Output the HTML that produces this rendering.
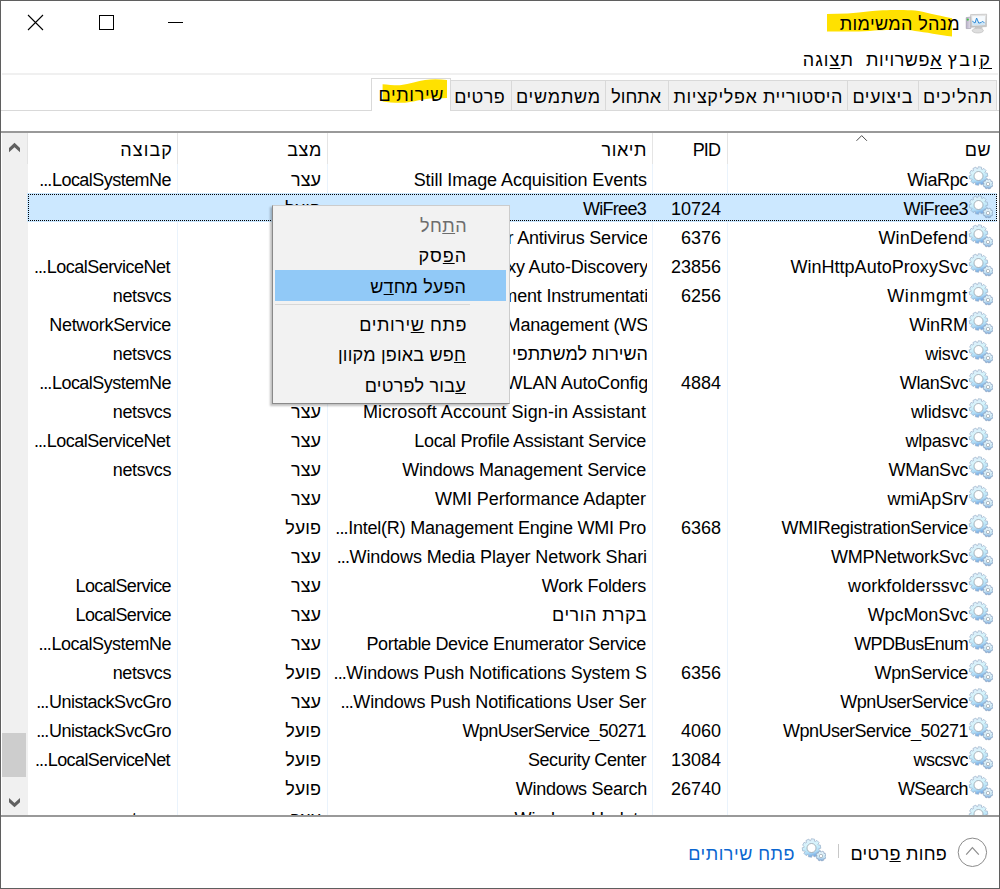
<!DOCTYPE html>
<html><head><meta charset="utf-8">
<style>
html,body{margin:0;padding:0;}
body{width:1000px;height:889px;overflow:hidden;background:#fff;position:relative;font-family:"Liberation Sans",sans-serif;font-size:18px;color:#000;}
.a{position:absolute;white-space:nowrap;line-height:20px;height:20px;}
.frame{position:absolute;left:0;top:0;width:1000px;height:889px;box-sizing:border-box;border:1px solid #5f5f5f;z-index:50;pointer-events:none;}
.u{text-decoration:underline;text-underline-offset:1px;text-decoration-thickness:1px;}
.um{text-decoration:underline;text-underline-offset:2px;text-decoration-thickness:1px;}
.tab{position:absolute;top:80px;height:30px;box-sizing:border-box;background:#f0f0f0;border:1px solid #d9d9d9;border-bottom:none;}
.vd{position:absolute;width:1px;background:#e5e5e5;}
.vdr{position:absolute;width:1px;background:#eaf3fc;}
.row{position:absolute;left:28px;width:970px;height:29px;}
.row.last .c{top:7px;}
.row.sel{background:#cce8ff;width:969px;box-shadow:-1px 0 0 #cce8ff;}
.row .c{position:absolute;top:6px;height:20px;line-height:20px;white-space:nowrap;overflow:hidden;direction:rtl;text-align:right;}
.dt{letter-spacing:-0.9px;margin-right:0.5px}
.cn{left:700px;width:240px;}
.gi{position:absolute;left:939px;top:1px;}
.cp{left:625px;width:68px;}
.cd{left:300px;width:319px;}
.cs{left:150px;width:143px;}
.cg{left:0px;width:144px;}
</style></head><body>
<svg width="0" height="0" style="position:absolute">
<defs>
<linearGradient id="gb" x1="0" y1="0" x2="0.25" y2="1"><stop offset="0" stop-color="#e2ecf8"/><stop offset="0.45" stop-color="#d4f4fc"/><stop offset="0.8" stop-color="#b0dcf6"/><stop offset="1" stop-color="#7cb0e6"/></linearGradient>
<linearGradient id="gs" x1="0" y1="0" x2="0" y2="1"><stop offset="0" stop-color="#eef8fc"/><stop offset="0.6" stop-color="#cdeaf8"/><stop offset="1" stop-color="#7aa8dc"/></linearGradient>
<symbol id="gear" viewBox="0 0 26 26">
<path d="M18.75,12.47L20.37,13.78L18.87,16.67L17.04,15.91L16.50,16.45L17.05,18.47L14.13,19.92L13.10,18.23L12.34,18.35L11.60,20.30L8.39,19.76L8.55,17.79L7.86,17.44L6.11,18.58L3.83,16.26L5.12,14.75L4.77,14.07L2.69,13.97L2.20,10.75L4.13,10.29L4.25,9.53L2.63,8.22L4.13,5.33L5.96,6.09L6.50,5.55L5.95,3.53L8.87,2.08L9.90,3.77L10.66,3.65L11.40,1.70L14.61,2.24L14.45,4.21L15.14,4.56L16.89,3.42L19.17,5.74L17.88,7.25L18.23,7.93L20.31,8.03L20.80,11.25L18.87,11.71Z" fill="url(#gb)" stroke="#9ab0c8" stroke-width="0.7"/>
<circle cx="11.5" cy="11" r="4.5" fill="#fff" stroke="#8e98a2" stroke-width="0.7"/>
<path d="M24.88,19.39L25.87,20.14L24.92,22.10L23.84,21.67L23.47,22.02L23.64,23.25L21.58,23.97L21.12,22.90L20.61,22.88L19.86,23.87L17.90,22.92L18.33,21.84L17.98,21.47L16.75,21.64L16.03,19.58L17.10,19.12L17.12,18.61L16.13,17.86L17.08,15.90L18.16,16.33L18.53,15.98L18.36,14.75L20.42,14.03L20.88,15.10L21.39,15.12L22.14,14.13L24.10,15.08L23.67,16.16L24.02,16.53L25.25,16.36L25.97,18.42L24.90,18.88Z" fill="url(#gs)" stroke="#8aa2c0" stroke-width="0.7"/>
<circle cx="21" cy="19" r="1.7" fill="#fff" stroke="#8c96a0" stroke-width="0.6"/>
</symbol>
</defs></svg>
<div class="frame"></div>
<!-- title bar -->
<svg class="a" style="left:0;top:0;width:200px;height:45px" width="200" height="45">
<path d="M28,15L43,30M43,15L28,30" stroke="#000" stroke-width="1.1" fill="none"/>
<rect x="99.5" y="15.5" width="14" height="14" stroke="#000" stroke-width="1" fill="none"/>
<path d="M168,22.5H183" stroke="#000" stroke-width="1" fill="none"/>
</svg>
<svg class="a" style="left:820px;top:5px;width:140px;height:35px" width="140" height="35">
<path d="M7,9.1 C20,9 35,8.4 50,6.3 C60,5 85,4.5 95,5.6 C105,7 115,10 132,13.3 L132,31.5 C120,30 105,27 95,25.9 C85,24.5 75,24.5 50,25.9 C35,26.6 20,26.6 7,26.6 Z" fill="#ffe100"/>
</svg>
<div class="a" id="title" style="right:40.00px;top:14px;letter-spacing:0.375px;">מנהל המשימות</div>
<svg class="a" style="left:965px;top:13px;width:24px;height:22px" width="24" height="22">
<defs><linearGradient id="tw" x1="0" y1="0" x2="1" y2="0"><stop offset="0" stop-color="#b8b0c8"/><stop offset="1" stop-color="#e4e0ea"/></linearGradient>
<linearGradient id="mf" x1="0" y1="0" x2="0" y2="1"><stop offset="0" stop-color="#e8e8e8"/><stop offset="1" stop-color="#c4c4c4"/></linearGradient></defs>
<path d="M1.2,4.6 L5.8,4 L5.8,15.5 L1.2,15.6 Z" fill="url(#tw)" stroke="#9c98aa" stroke-width="0.6"/>
<circle cx="2.8" cy="6.6" r="1.1" fill="#3fbf3f"/>
<path d="M5.6,1.6 L21.6,1.2 L21.4,13.6 L5.8,14.2 Z" fill="url(#mf)" stroke="#b4b4b4" stroke-width="0.6"/>
<path d="M7.2,3.2 L20,3 L19.9,11.9 L7.3,12.4 Z" fill="#f6fafd"/>
<path d="M7.3,8.5 L10,10.2 L11.6,5 L13.8,10.4 L16.4,9.6 L17.6,8.4 L19.6,10.4 L19.8,11.9 L7.3,12.3 Z" fill="#cfe6f6"/>
<path d="M7.3,8.2 L10,10 L11.6,5 L13.8,10.2 L16.4,9.4 L17.6,8.2 L19.6,10.2" stroke="#2f8ad6" stroke-width="1" fill="none" stroke-linejoin="round"/>
<path d="M10,14 L17,13.8 L18,15.5 L9.5,15.8 Z" fill="#c8c8c8"/>
<ellipse cx="12.8" cy="17.6" rx="5.6" ry="2.4" fill="#dedede" stroke="#b6b6b6" stroke-width="0.6"/>
</svg>
<!-- menu bar -->
<div class="a" id="kovetz" style="right:8.00px;top:50px;letter-spacing:2.250px;"><span class="um">ק</span>ובץ</div>
<div class="a" id="efsh" style="right:58.00px;top:50px;letter-spacing:0.562px;"><span class="um">א</span>פשרויות</div>
<div class="a" id="tazuga" style="right:146.00px;top:50px;letter-spacing:1.080px;">ת<span class="um">צ</span>וגה</div>
<div class="a" style="left:2px;top:73px;width:996px;height:2px;background:#f0f0f0"></div>
<!-- tabs -->
<div class="a" style="left:1px;top:110px;width:998px;height:1px;background:#d9d9d9"></div>
<div class="tab" style="left:918px;width:79px;"></div>
<div class="tab" style="left:847px;width:72px;"></div>
<div class="tab" style="left:668px;width:180px;"></div>
<div class="tab" style="left:605px;width:64px;"></div>
<div class="tab" style="left:511px;width:95px;"></div>
<div class="tab" style="left:450px;width:62px;"></div>
<div class="tab" style="left:371px;top:78px;width:80px;height:33px;background:#fff;"></div>
<svg class="a" style="left:370px;top:75px;width:80px;height:30px" width="80" height="30">
<path d="M12.6,9.3 C18,9.8 25,10.5 30,10.3 C40,9 48,6 55,5 C62,4 70,4.2 77,5 L77,23 C70,23.5 65,23.3 60,23.5 C50,24.5 45,26.5 35,27.8 C25,28 18,27.5 12.6,26.4 Z" fill="#ffe100"/>
</svg>
<div class="a" id="tab_tahalichim" style="right:7.00px;top:87px;letter-spacing:0.900px;">תהליכים</div>
<div class="a" id="tab_bitzuim" style="right:87.00px;top:87px;letter-spacing:0.514px;">ביצועים</div>
<div class="a" id="tab_hist" style="right:157.00px;top:87px;letter-spacing:0.568px;">היסטוריית אפליקציות</div>
<div class="a" id="tab_atchul" style="right:339.00px;top:87px;letter-spacing:0.000px;">אתחול</div>
<div class="a" id="tab_mishtamshim" style="right:399.00px;top:87px;letter-spacing:0.771px;">משתמשים</div>
<div class="a" id="tab_pratim" style="right:495.00px;top:87px;letter-spacing:0.360px;">פרטים</div>
<div class="a" id="tab_sherutim" style="right:556.00px;top:85px;letter-spacing:0.643px;">שירותים</div>
<!-- list separator -->
<div class="a" style="left:1px;top:131px;width:998px;height:2px;background:#999"></div>
<!-- scrollbar -->
<div class="a" style="left:2px;top:133px;width:26px;height:682px;background:#f0f0f0"></div>
<div class="a" style="left:27px;top:133px;width:1px;height:31px;background:#e3e3e3"></div>
<svg class="a" style="left:0;top:133px;width:28px;height:682px" width="28" height="682">
<path d="M9,15 L14.5,9.8 L20,15 L20,19.2 L14.5,14.2 L9,19.2 Z" fill="#606060"/>
<rect x="2" y="600" width="24" height="44" fill="#cdcdcd"/>
<path d="M9,665 L14.5,670 L20,665 L20,669.2 L14.5,674.2 L9,669.2 Z" fill="#606060"/>
</svg>
<!-- header -->
<div class="vd" style="left:177px;top:133px;height:31px"></div>
<div class="vd" style="left:327px;top:133px;height:31px"></div>
<div class="vd" style="left:652px;top:133px;height:31px"></div>
<div class="vd" style="left:727px;top:133px;height:31px"></div>
<div class="vdr" style="left:177px;top:164px;height:651px"></div>
<div class="vdr" style="left:327px;top:164px;height:651px"></div>
<div class="vdr" style="left:652px;top:164px;height:651px"></div>
<div class="vdr" style="left:727px;top:164px;height:651px"></div>
<svg class="a" style="left:850px;top:133px;width:24px;height:10px" width="24" height="10">
<path d="M6.5,7.8 L11.7,2.6 L16.9,7.8" stroke="#4a4a4a" stroke-width="1" fill="none"/>
</svg>
<div class="a" id="hdr_shem" style="right:9.00px;top:140px;letter-spacing:0.450px;">שם</div>
<div class="a" id="hdr_pid" style="right:280.00px;top:140px;letter-spacing:-0.900px;">PID</div>
<div class="a" id="hdr_teur" style="right:353.00px;top:140px;letter-spacing:0.540px;">תיאור</div>
<div class="a" id="hdr_matzav" style="right:678.00px;top:140px;letter-spacing:0.600px;">מצב</div>
<div class="a" id="hdr_kvutza" style="right:827.00px;top:140px;letter-spacing:1.080px;">קבוצה</div>
<!-- rows -->
<div class="a" style="left:0;top:164px;width:1000px;height:651px;overflow:hidden;">
<div style="position:absolute;left:0;top:-164px;width:1000px;height:889px;">
<div class="row" style="top:164px"><div class="c cn"><bdi style="letter-spacing:-0.360px;position:relative;left:0.00px">WiaRpc</bdi></div><svg class="gi" width="26" height="26"><use href="#gear"/></svg><div class="c cd"><bdi dir="ltr" style="letter-spacing:-0.060px;position:relative;left:0.00px">Still Image Acquisition Events</bdi></div><div class="c cs"><bdi>עצר</bdi></div><div class="c cg"><bdi dir="ltr" style="letter-spacing:-0.540px;position:relative;left:-1.00px"><span class="dt">...</span>LocalSystemNe</bdi></div></div><div class="row sel" style="top:193px"><div class="c cn"><bdi style="letter-spacing:-0.489px;position:relative;left:0.00px">WiFree3</bdi></div><svg class="gi" width="26" height="26"><use href="#gear"/></svg><div class="c cp"><bdi style="letter-spacing:0.000px;position:relative;left:0.00px">10724</bdi></div><div class="c cd"><bdi dir="ltr" style="letter-spacing:-0.720px;position:relative;left:-1.00px">WiFree3</bdi></div><div class="c cs"><bdi>פועל</bdi></div></div><div class="row" style="top:222px"><div class="c cn"><bdi style="letter-spacing:0.040px;position:relative;left:0.00px">WinDefend</bdi></div><svg class="gi" width="26" height="26"><use href="#gear"/></svg><div class="c cp"><bdi style="letter-spacing:0.000px;position:relative;left:0.00px">6376</bdi></div><div class="c cd"><bdi dir="ltr" style="letter-spacing:-0.190px;position:relative;left:1.00px">Windows Defender Antivirus Service</bdi></div></div><div class="row" style="top:251px"><div class="c cn"><bdi style="letter-spacing:0.028px;position:relative;left:0.00px">WinHttpAutoProxySvc</bdi></div><svg class="gi" width="26" height="26"><use href="#gear"/></svg><div class="c cp"><bdi style="letter-spacing:0.000px;position:relative;left:0.00px">23856</bdi></div><div class="c cd"><bdi dir="ltr" style="letter-spacing:-0.190px;position:relative;left:1.00px">WinHTTP Web Proxy Auto-Discovery</bdi></div><div class="c cg"><bdi dir="ltr" style="letter-spacing:-0.520px;position:relative;left:-2.00px"><span class="dt">...</span>LocalServiceNet</bdi></div></div><div class="row" style="top:280px"><div class="c cn"><bdi style="letter-spacing:0.694px;position:relative;left:0.00px">Winmgmt</bdi></div><svg class="gi" width="26" height="26"><use href="#gear"/></svg><div class="c cp"><bdi style="letter-spacing:0.000px;position:relative;left:0.00px">6256</bdi></div><div class="c cd"><bdi dir="ltr" style="letter-spacing:-0.190px;position:relative;left:1.00px">Windows Management Instrumentati</bdi></div><div class="c cg"><bdi dir="ltr" style="letter-spacing:-0.411px;position:relative;left:-1.00px">netsvcs</bdi></div></div><div class="row" style="top:309px"><div class="c cn"><bdi style="letter-spacing:-0.036px;position:relative;left:0.00px">WinRM</bdi></div><svg class="gi" width="26" height="26"><use href="#gear"/></svg><div class="c cd"><bdi dir="ltr" style="letter-spacing:-0.190px;position:relative;left:1.00px">Windows Remote Management (WS</bdi></div><div class="c cg"><bdi dir="ltr" style="letter-spacing:-0.309px;position:relative;left:-1.00px">NetworkService</bdi></div></div><div class="row" style="top:338px"><div class="c cn"><bdi style="letter-spacing:-0.252px;position:relative;left:0.00px">wisvc</bdi></div><svg class="gi" width="26" height="26"><use href="#gear"/></svg><div class="c cd"><bdi dir="rtl" style="letter-spacing:0.000px;position:relative;left:1.00px">השירות למשתתפי Windows Insider</bdi></div><div class="c cg"><bdi dir="ltr" style="letter-spacing:-0.411px;position:relative;left:-1.00px">netsvcs</bdi></div></div><div class="row" style="top:367px"><div class="c cn"><bdi style="letter-spacing:-0.411px;position:relative;left:0.00px">WlanSvc</bdi></div><svg class="gi" width="26" height="26"><use href="#gear"/></svg><div class="c cp"><bdi style="letter-spacing:0.000px;position:relative;left:0.00px">4884</bdi></div><div class="c cd"><bdi dir="ltr" style="letter-spacing:-0.190px;position:relative;left:1.00px">WLAN AutoConfig</bdi></div><div class="c cg"><bdi dir="ltr" style="letter-spacing:-0.540px;position:relative;left:-1.00px"><span class="dt">...</span>LocalSystemNe</bdi></div></div><div class="row" style="top:396px"><div class="c cn"><bdi style="letter-spacing:-0.129px;position:relative;left:0.00px">wlidsvc</bdi></div><svg class="gi" width="26" height="26"><use href="#gear"/></svg><div class="c cd"><bdi dir="ltr" style="letter-spacing:0.082px;position:relative;left:-1.00px">Microsoft Account Sign-in Assistant</bdi></div><div class="c cs"><bdi>עצר</bdi></div><div class="c cg"><bdi dir="ltr" style="letter-spacing:-0.411px;position:relative;left:-1.00px">netsvcs</bdi></div></div><div class="row" style="top:425px"><div class="c cn"><bdi style="letter-spacing:-0.206px;position:relative;left:0.00px">wlpasvc</bdi></div><svg class="gi" width="26" height="26"><use href="#gear"/></svg><div class="c cd"><bdi dir="ltr" style="letter-spacing:-0.302px;position:relative;left:-1.00px">Local Profile Assistant Service</bdi></div><div class="c cs"><bdi>עצר</bdi></div><div class="c cg"><bdi dir="ltr" style="letter-spacing:-0.520px;position:relative;left:-2.00px"><span class="dt">...</span>LocalServiceNet</bdi></div></div><div class="row" style="top:454px"><div class="c cn"><bdi style="letter-spacing:-0.360px;position:relative;left:0.00px">WManSvc</bdi></div><svg class="gi" width="26" height="26"><use href="#gear"/></svg><div class="c cd"><bdi dir="ltr" style="letter-spacing:-0.166px;position:relative;left:-1.00px">Windows Management Service</bdi></div><div class="c cs"><bdi>עצר</bdi></div><div class="c cg"><bdi dir="ltr" style="letter-spacing:-0.411px;position:relative;left:-1.00px">netsvcs</bdi></div></div><div class="row" style="top:483px"><div class="c cn"><bdi style="letter-spacing:-0.068px;position:relative;left:0.00px">wmiApSrv</bdi></div><svg class="gi" width="26" height="26"><use href="#gear"/></svg><div class="c cd"><bdi dir="ltr" style="letter-spacing:-0.047px;position:relative;left:-1.00px">WMI Performance Adapter</bdi></div><div class="c cs"><bdi>עצר</bdi></div></div><div class="row" style="top:512px"><div class="c cn"><bdi style="letter-spacing:-0.303px;position:relative;left:0.00px">WMIRegistrationService</bdi></div><svg class="gi" width="26" height="26"><use href="#gear"/></svg><div class="c cp"><bdi style="letter-spacing:0.000px;position:relative;left:0.00px">6368</bdi></div><div class="c cd"><bdi dir="ltr" style="letter-spacing:-0.214px;position:relative;left:-1.00px"><span class="dt">...</span>Intel(R) Management Engine WMI Pro</bdi></div><div class="c cs"><bdi>פועל</bdi></div></div><div class="row" style="top:541px"><div class="c cn"><bdi style="letter-spacing:-0.222px;position:relative;left:0.00px">WMPNetworkSvc</bdi></div><svg class="gi" width="26" height="26"><use href="#gear"/></svg><div class="c cd"><bdi dir="ltr" style="letter-spacing:-0.107px;position:relative;left:0.00px"><span class="dt">...</span>Windows Media Player Network Shari</bdi></div><div class="c cs"><bdi>עצר</bdi></div></div><div class="row" style="top:570px"><div class="c cn"><bdi style="letter-spacing:0.064px;position:relative;left:0.00px">workfolderssvc</bdi></div><svg class="gi" width="26" height="26"><use href="#gear"/></svg><div class="c cd"><bdi dir="ltr" style="letter-spacing:-0.210px;position:relative;left:-1.00px">Work Folders</bdi></div><div class="c cs"><bdi>עצר</bdi></div><div class="c cg"><bdi dir="ltr" style="letter-spacing:-0.630px;position:relative;left:-1.00px">LocalService</bdi></div></div><div class="row" style="top:599px"><div class="c cn"><bdi style="letter-spacing:-0.080px;position:relative;left:0.00px">WpcMonSvc</bdi></div><svg class="gi" width="26" height="26"><use href="#gear"/></svg><div class="c cd"><bdi dir="rtl" style="letter-spacing:0.522px;position:relative;left:0.00px">בקרת הורים</bdi></div><div class="c cs"><bdi>עצר</bdi></div><div class="c cg"><bdi dir="ltr" style="letter-spacing:-0.630px;position:relative;left:-1.00px">LocalService</bdi></div></div><div class="row" style="top:628px"><div class="c cn"><bdi style="letter-spacing:-0.630px;position:relative;left:0.00px">WPDBusEnum</bdi></div><svg class="gi" width="26" height="26"><use href="#gear"/></svg><div class="c cd"><bdi dir="ltr" style="letter-spacing:-0.339px;position:relative;left:-1.00px">Portable Device Enumerator Service</bdi></div><div class="c cs"><bdi>עצר</bdi></div><div class="c cg"><bdi dir="ltr" style="letter-spacing:-0.495px;position:relative;left:-1.00px"><span class="dt">...</span>LocalSystemNe</bdi></div></div><div class="row" style="top:657px"><div class="c cn"><bdi style="letter-spacing:-0.360px;position:relative;left:0.00px">WpnService</bdi></div><svg class="gi" width="26" height="26"><use href="#gear"/></svg><div class="c cp"><bdi style="letter-spacing:0.000px;position:relative;left:0.00px">6356</bdi></div><div class="c cd"><bdi dir="ltr" style="letter-spacing:-0.099px;position:relative;left:0.00px"><span class="dt">...</span>Windows Push Notifications System S</bdi></div><div class="c cs"><bdi>פועל</bdi></div><div class="c cg"><bdi dir="ltr" style="letter-spacing:-0.386px;position:relative;left:-1.00px">netsvcs</bdi></div></div><div class="row" style="top:686px"><div class="c cn"><bdi style="letter-spacing:-0.514px;position:relative;left:0.00px">WpnUserService</bdi></div><svg class="gi" width="26" height="26"><use href="#gear"/></svg><div class="c cd"><bdi dir="ltr" style="letter-spacing:-0.156px;position:relative;left:-1.00px"><span class="dt">...</span>Windows Push Notifications User Ser</bdi></div><div class="c cs"><bdi>עצר</bdi></div><div class="c cg"><bdi dir="ltr" style="letter-spacing:-0.498px;position:relative;left:-1.00px"><span class="dt">...</span>UnistackSvcGro</bdi></div></div><div class="row" style="top:715px"><div class="c cn"><bdi style="letter-spacing:-0.504px;position:relative;left:0.00px">WpnUserService_50271</bdi></div><svg class="gi" width="26" height="26"><use href="#gear"/></svg><div class="c cp"><bdi style="letter-spacing:0.000px;position:relative;left:0.00px">4060</bdi></div><div class="c cd"><bdi dir="ltr" style="letter-spacing:-0.576px;position:relative;left:-1.00px">WpnUserService_50271</bdi></div><div class="c cs"><bdi>פועל</bdi></div><div class="c cg"><bdi dir="ltr" style="letter-spacing:-0.498px;position:relative;left:-1.00px"><span class="dt">...</span>UnistackSvcGro</bdi></div></div><div class="row" style="top:744px"><div class="c cn"><bdi style="letter-spacing:-0.600px;position:relative;left:0.00px">wscsvc</bdi></div><svg class="gi" width="26" height="26"><use href="#gear"/></svg><div class="c cp"><bdi style="letter-spacing:0.000px;position:relative;left:0.00px">13084</bdi></div><div class="c cd"><bdi dir="ltr" style="letter-spacing:-0.396px;position:relative;left:-1.00px">Security Center</bdi></div><div class="c cs"><bdi>פועל</bdi></div><div class="c cg"><bdi dir="ltr" style="letter-spacing:-0.590px;position:relative;left:-2.00px"><span class="dt">...</span>LocalServiceNet</bdi></div></div><div class="row" style="top:773px"><div class="c cn"><bdi style="letter-spacing:-0.566px;position:relative;left:0.00px">WSearch</bdi></div><svg class="gi" width="26" height="26"><use href="#gear"/></svg><div class="c cp"><bdi style="letter-spacing:0.000px;position:relative;left:0.00px">26740</bdi></div><div class="c cd"><bdi dir="ltr" style="letter-spacing:-0.270px;position:relative;left:0.00px">Windows Search</bdi></div><div class="c cs"><bdi>פועל</bdi></div></div><div class="row last" style="top:802px"><div class="c cn"><bdi style="letter-spacing:-0.300px;position:relative;left:1.00px">wuauserv</bdi></div><svg class="gi" width="26" height="26"><use href="#gear"/></svg><div class="c cd"><bdi dir="ltr" style="letter-spacing:-0.190px;position:relative;left:1.00px">Windows Update</bdi></div><div class="c cs"><bdi>עצר</bdi></div><div class="c cg"><bdi dir="ltr" style="letter-spacing:-0.411px;position:relative;left:-1.00px">netsvcs</bdi></div></div>
</div></div>
<div class="a" style="left:28px;top:194px;width:969px;height:27px;box-sizing:border-box;border:1px dotted #000;"></div>
<!-- bottom separator -->
<div class="a" style="left:1px;top:815px;width:998px;height:2px;background:#999"></div>
<!-- footer -->
<svg class="a" style="left:955px;top:835px;width:35px;height:35px" width="35" height="35">
<circle cx="17.4" cy="17.3" r="14.2" stroke="#8c8c8c" stroke-width="1" fill="none"/>
<path d="M11.2,19.6 L17.4,12.6 L23.8,19.6" stroke="#8c8c8c" stroke-width="1.2" fill="none"/>
</svg>
<div class="a" id="ft_less" style="right:53.00px;top:844px;letter-spacing:0.270px;">פחות <span class="u">פ</span>רטים</div>
<div class="a" style="left:838px;top:844px;width:1px;height:14px;background:#c8c8c8"></div>
<svg class="a" style="left:800px;top:837px;width:26px;height:26px" width="26" height="26"><use href="#gear"/></svg>
<div class="a" id="ft_open" style="right:205.00px;top:844px;letter-spacing:0.491px;color:#0a66d0">פתח שירותים</div>
<!-- context menu -->
<div class="a" style="left:272px;top:205px;width:238px;height:199px;box-sizing:border-box;background:#f2f2f2;border:1px solid #cccccc;border-left-color:#8a8a8a;border-bottom-color:#8a8a8a;box-shadow:-2px 2px 2px rgba(0,0,0,0.25);"></div>
<div class="a" style="left:275px;top:270px;width:231px;height:31px;background:#91c9f7"></div>
<div class="a" style="left:275px;top:304px;width:195px;height:1px;background:#d7d7d7"></div>
<div class="a" id="ctx1" style="right:533.00px;top:216px;letter-spacing:0.450px;color:#6d6d6d">ה<span class="u">ת</span>חל</div>
<div class="a" id="ctx2" style="right:533.00px;top:246px;letter-spacing:0.900px;">ה<span class="u">פ</span>סק</div>
<div class="a" id="ctx3" style="right:534.00px;top:277px;letter-spacing:0.100px;">הפעל מח<span class="u">ד</span>ש</div>
<div class="a" id="ctx4" style="right:533.00px;top:315px;letter-spacing:0.573px;">פתח <span class="u">ש</span>ירותים</div>
<div class="a" id="ctx5" style="right:534.00px;top:345px;letter-spacing:0.193px;"><span class="u">ח</span>פש באופן מקוון</div>
<div class="a" id="ctx6" style="right:534.00px;top:376px;letter-spacing:0.245px;"><span class="u">ע</span>בור לפרטים</div>
</body></html>
